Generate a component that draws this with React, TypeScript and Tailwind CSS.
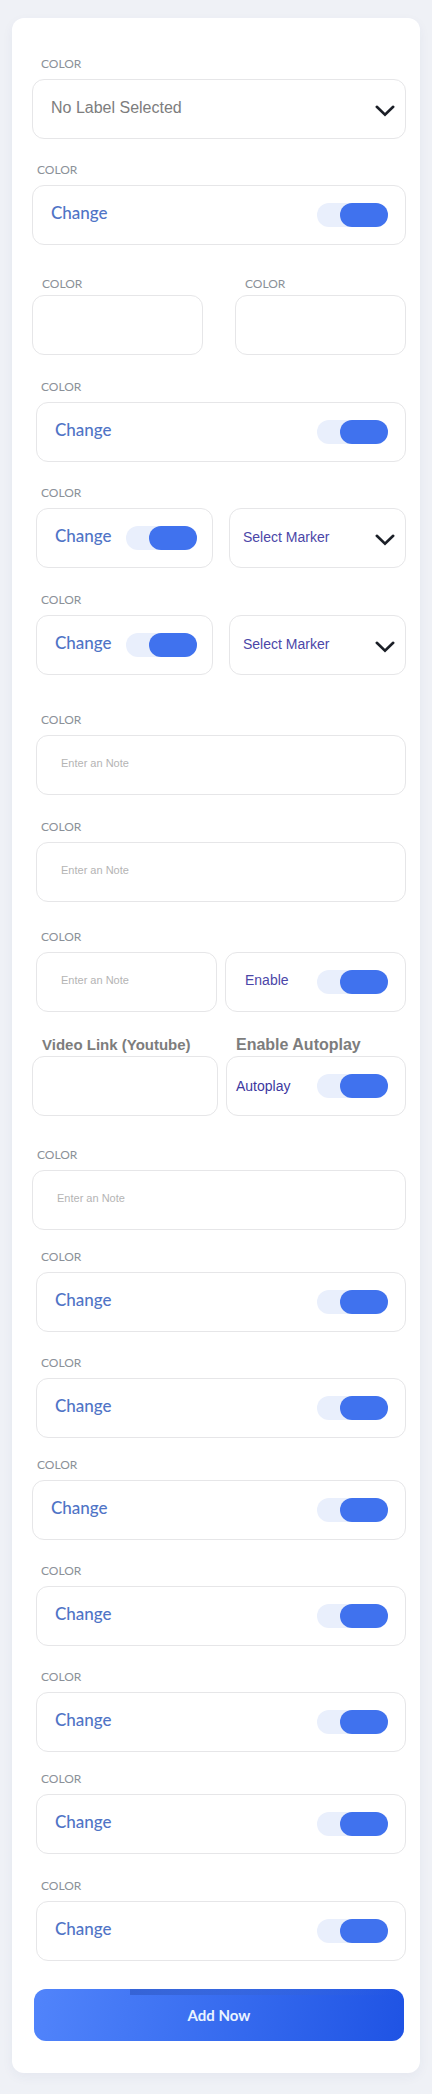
import { useId, type ReactNode } from "react";

type LabelKind = "small" | "indented" | "tight" | "video" | "autoplay";

const labelStyles: Record<LabelKind, string> = {
  small: "mb-2 pl-[5px] font-[Lato] text-xs leading-[14px] text-[#8b9199]",
  indented: "mb-2 pl-[9px] font-[Lato] text-xs leading-[14px] text-[#8b9199]",
  tight: "pl-[10px] font-[Lato] text-xs leading-[22px] text-[#8b9199]",
  video: "pl-[10px] text-[15px] font-bold leading-[22px] text-[#7d7d7d]",
  autoplay: "pl-[10px] text-base font-bold leading-[22px] text-[#7d7d7d]",
};

const box = "h-[60px] w-full rounded-xl border border-[#e6e6e8] bg-white";

function FieldLabel({ id, kind = "small", children = "COLOR" }: { id: string; kind?: LabelKind; children?: ReactNode }) {
  return (
    <label htmlFor={id} className={`block whitespace-nowrap ${labelStyles[kind]}`}>
      {children}
    </label>
  );
}

function ToggleBox({ id, text = "Change", textClass = "pb-1 pl-[18px] font-[Lato] text-[17px] font-medium text-[#4f74c6]", tight = false }: { id: string; text?: string; textClass?: string; tight?: boolean }) {
  return (
    <div className={`flex items-center justify-between ${box} ${tight ? "pr-[15px]" : "pr-[17px]"}`}>
      <label htmlFor={id} className={`leading-5 ${textClass}`}>
        {text}
      </label>
      <input
        id={id}
        type="checkbox"
        defaultChecked
        className="flex h-6 w-[71px] shrink-0 cursor-pointer appearance-none justify-start rounded-full bg-[#e9effc] before:h-6 before:w-12 before:rounded-full before:bg-[#9db4ee] before:content-[''] checked:justify-end checked:before:bg-[#4072ee]"
      />
    </div>
  );
}

function SelectBox({ id, text, textClass, ariaLabel }: { id: string; text: string; textClass: string; ariaLabel?: string }) {
  return (
    <div className="grid items-center">
      <select id={id} aria-label={ariaLabel} className={`col-start-1 row-start-1 appearance-none pr-10 ${box} ${textClass}`}>
        <option>{text}</option>
      </select>
      <svg
        viewBox="0 0 20 12"
        className="pointer-events-none col-start-1 row-start-1 mr-[11px] mt-1 h-3 w-5 justify-self-end"
        fill="none"
        stroke="#1b1f27"
        strokeWidth="2.6"
        strokeLinecap="round"
        strokeLinejoin="miter"
        aria-hidden="true"
      >
        <path d="M1.8 1.8 10 9.8 18.2 1.8" />
      </svg>
    </div>
  );
}

function NoteInput({ id, placeholder = "Enter an Note" }: { id: string; placeholder?: string }) {
  return (
    <input
      id={id}
      type="text"
      placeholder={placeholder}
      className={`${box} block pb-1 pl-6 pr-4 text-[11px] text-[#555] placeholder:text-[#b4b4b4]`}
    />
  );
}

function ToggleField({ className }: { className: string }) {
  const id = useId();
  return (
    <div className={className}>
      <FieldLabel id={id} />
      <ToggleBox id={id} />
    </div>
  );
}

function NoteField({ className }: { className: string }) {
  const id = useId();
  return (
    <div className={className}>
      <FieldLabel id={id} />
      <NoteInput id={id} />
    </div>
  );
}

function MarkerRow({ className }: { className: string }) {
  const id = useId();
  return (
    <div className={`grid grid-cols-2 items-end gap-4 ${className}`}>
      <div>
        <FieldLabel id={id} />
        <ToggleBox id={id} tight />
      </div>
      <SelectBox id={`${id}-marker`} ariaLabel="Select Marker" text="Select Marker" textClass="pb-0.5 pl-[13px] text-sm text-[#4b46a8]" />
    </div>
  );
}

export default function App() {
  return (
    <main className="min-h-screen bg-[#eff1f6] px-3 pb-5 pt-[18px] font-['Liberation_Sans',Arial,sans-serif]">
      <form
        onSubmit={(event) => event.preventDefault()}
        className="rounded-xl bg-white pb-8 pl-5 pr-3.5 pt-[39px] shadow-[0_4px_12px_rgba(40,60,110,0.05)]"
      >
        <div>
          <FieldLabel id="label" kind="indented" />
          <SelectBox id="label" text="No Label Selected" textClass="pb-0.5 pl-[18px] text-base text-[#7d7d7d]" />
        </div>

        <ToggleField className="mt-6" />

        <div className="mt-7 grid grid-cols-2 gap-8">
          <div>
            <FieldLabel id="first-value" kind="tight" />
            <NoteInput id="first-value" placeholder="" />
          </div>
          <div>
            <FieldLabel id="second-value" kind="tight" />
            <NoteInput id="second-value" placeholder="" />
          </div>
        </div>

        <ToggleField className="mt-[25px] pl-1" />
        <MarkerRow className="mt-6 pl-1" />
        <MarkerRow className="mt-[25px] pl-1" />
        <NoteField className="mt-[38px] pl-1" />
        <NoteField className="mt-[25px] pl-1" />

        <div className="mt-7 grid grid-cols-2 items-end gap-2 pl-1">
          <div>
            <FieldLabel id="enable-note" />
            <NoteInput id="enable-note" />
          </div>
          <ToggleBox id="enable" text="Enable" textClass="pb-1 pl-[19px] text-sm text-[#4b46a8]" />
        </div>

        <div className="mt-[22px] grid grid-cols-[31fr_30fr] gap-2">
          <div>
            <FieldLabel id="video" kind="video">
              Video Link (Youtube)
            </FieldLabel>
            <NoteInput id="video" placeholder="" />
          </div>
          <div>
            <FieldLabel id="autoplay" kind="autoplay">
              Enable Autoplay
            </FieldLabel>
            <ToggleBox id="autoplay" text="Autoplay" textClass="pl-[9px] text-sm text-[#3d38a0]" />
          </div>
        </div>

        <NoteField className="mt-8" />
        <ToggleField className="mt-5 pl-1" />
        <ToggleField className="mt-6 pl-1" />
        <ToggleField className="mt-5" />
        <ToggleField className="mt-6 pl-1" />
        <ToggleField className="mt-6 pl-1" />
        <ToggleField className="mt-5 pl-1" />
        <ToggleField className="mt-[25px] pl-1" />

        <div className="mt-7 px-0.5">
          <button
            type="submit"
            className="relative block h-[52px] w-full overflow-hidden rounded-xl bg-linear-100 from-[#5184fb] to-[#1f53e4] font-[Lato] text-[15px] font-bold text-[#eaf4ff]"
          >
            <span className="absolute left-[26%] right-0 top-0 h-1.5 bg-linear-to-r from-[#3563d6] to-transparent" />
            Add Now
          </button>
        </div>
      </form>
    </main>
  );
}
